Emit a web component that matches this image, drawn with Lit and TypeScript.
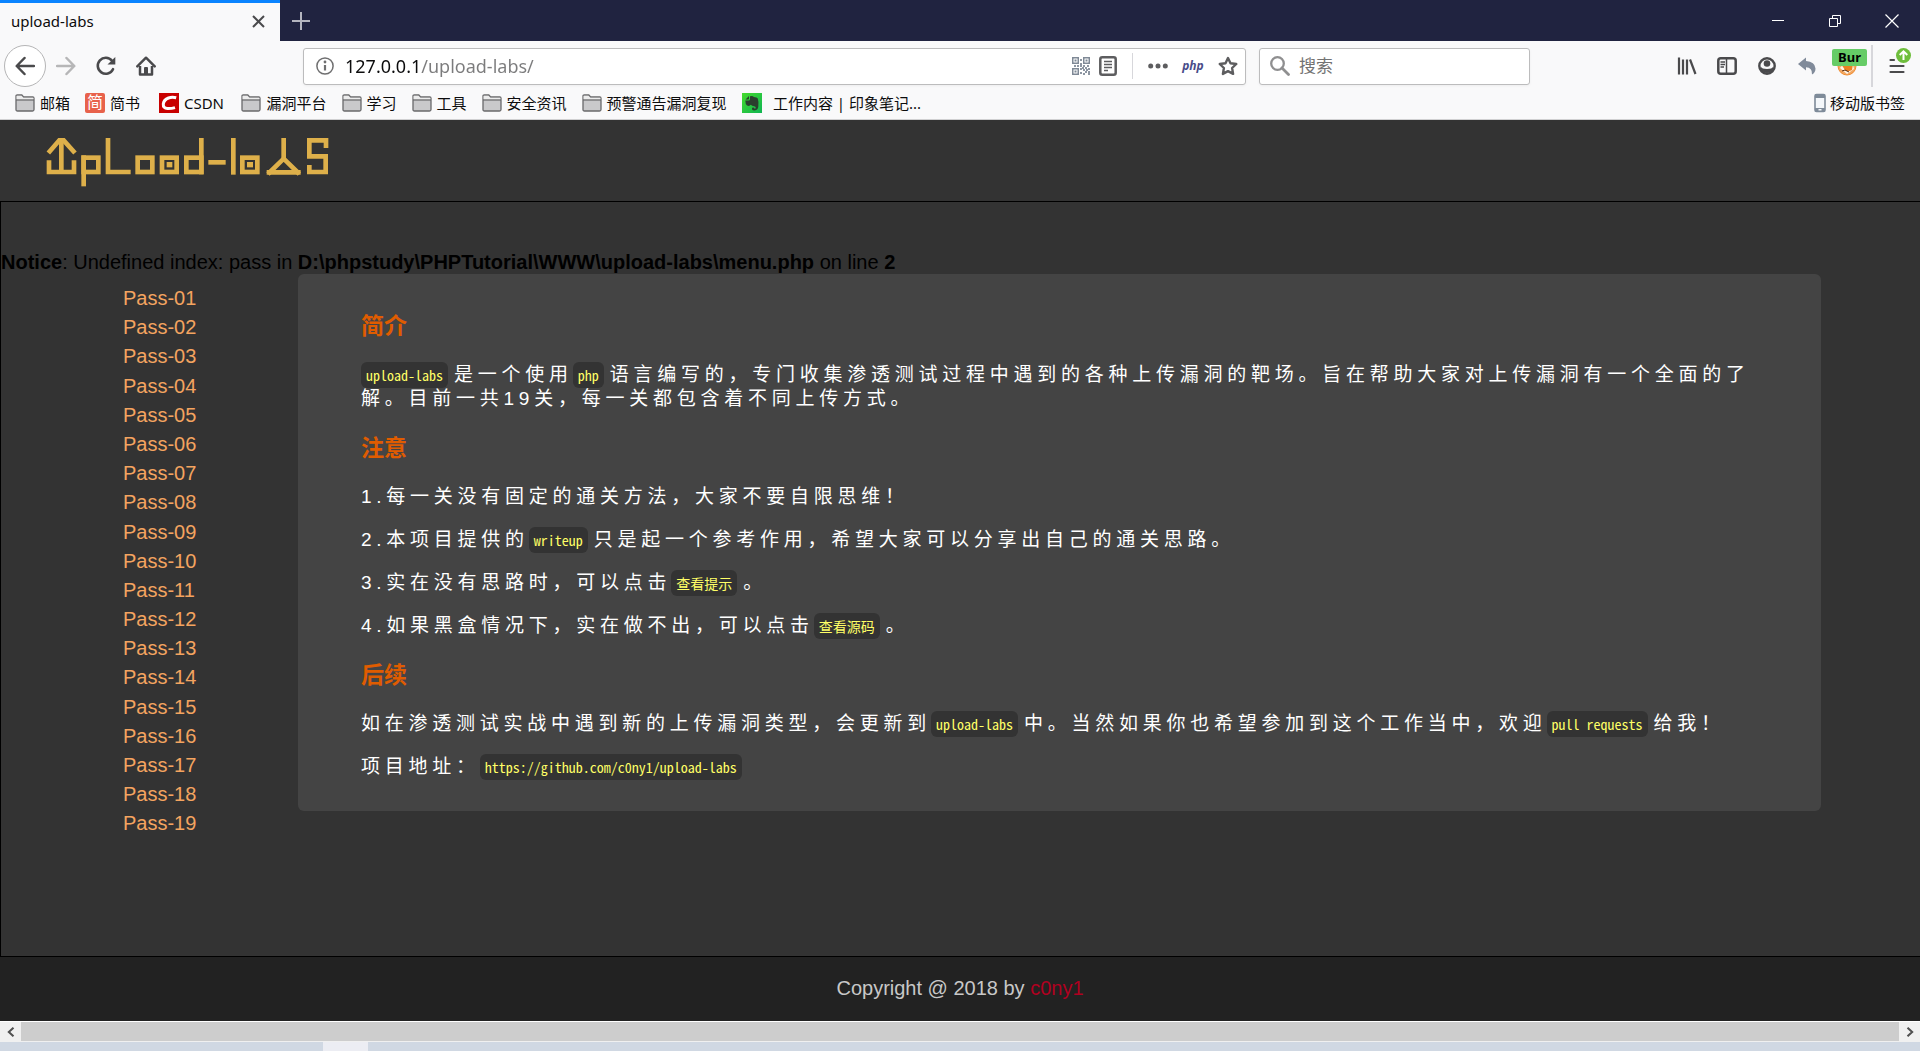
import { LitElement, html, css, svg } from "lit";
import type { TemplateResult } from "lit";
import { customElement } from "lit/decorators.js";

const folder = html`<svg width="20" height="20" viewBox="0 0 20 20" aria-hidden="true">
  <path d="M1 16.5V3.2Q1 2 2.2 2H6.8L8.6 4H17.8Q19 4 19 5.200V16.500Q19 18 17.500 18H2.500Q1 18 1 16.500Z" fill="#c9c9cb" stroke="#69696b" stroke-width="1.300"/>
  <path d="M1.600 2.700H6.500L8.300 4.700H18.400V6.500H1.600Z" fill="#ececec"/>
  <path d="M1 7H19" stroke="#69696b" stroke-width="1.200"/>
</svg>`;

const jianshu = html`<span class="favicon jianshu" aria-hidden="true">简</span>`;

const csdn = html`<svg width="20" height="20" viewBox="0 0 20 20" aria-hidden="true">
  <rect width="20" height="20" fill="#c80000"/>
  <path d="M17.200 4.800Q13 3.800 9.500 5Q4.800 6.800 4.300 11Q4 15.300 8.500 15.500Q12.500 15.600 16 14.600" fill="none" stroke="#fff" stroke-width="3"/>
</svg>`;

const evernote = html`<svg width="20" height="20" viewBox="0 0 20 20" aria-hidden="true">
  <defs><linearGradient id="leaf" x1="0" y1="0" x2="1" y2="1"><stop offset="0" stop-color="#45da2c"/><stop offset="1" stop-color="#0fb553"/></linearGradient></defs>
  <rect width="20" height="20" fill="url(#leaf)"/>
  <path d="M7 3L3.500 6.500H6.200Q7 6.500 7 5.600ZM8 3.200V6Q8 7.500 6.500 7.500H3.300Q3.300 11 5 12.500Q7.500 13.600 8.800 11.800Q10 13.200 12 13.300Q13.800 13.400 13.800 15Q13.800 15.800 12.500 15.800Q12 14.300 10.600 14.600Q9.600 15.200 10.200 16.700Q11 17.700 13.500 17.300Q16 16.800 16.300 13.500Q16.900 9 15.800 5.600Q15.200 4.300 11.800 4Q11 2.500 8 3.200Z" fill="#2b3f2e"/>
</svg>`;

const phone = html`<svg width="12" height="20" viewBox="0 0 12 20" aria-hidden="true">
  <rect x="1" y="1.500" width="10" height="17" rx="1.500" fill="#f4f7fa" stroke="#7f8b99" stroke-width="1.600"/>
  <path d="M1 1.500H11V5H1ZM1 15H11V18.500H1Z" fill="#7f8b99"/>
  <rect x="4.500" y="16" width="3" height="1.500" fill="#f4f7fa"/>
</svg>`;

interface Bookmark { icon: TemplateResult; label: string; }

const bookmarks: Bookmark[] = [
  { icon: folder, label: "邮箱" },
  { icon: jianshu, label: "简书 " },
  { icon: csdn, label: "CSDN\u2009" },
  { icon: folder, label: "漏洞平台" },
  { icon: folder, label: "学习" },
  { icon: folder, label: "工具" },
  { icon: folder, label: "安全资讯" },
  { icon: folder, label: "预警通告漏洞复现" },
  { icon: evernote, label: " \u2009工作内容 | 印象笔记..." },
];

@customElement("browser-chrome")
export class BrowserChrome extends LitElement {
  static styles = css`
    :host {
      display: block;
      background: #f9f9fa;
      border-bottom: 1px solid #d0d0d1;
      color: #0c0c0d;
      font: 15px/20px "Noto Sans", "Noto Sans CJK SC", sans-serif;
    }
    button, input { font: inherit; color: inherit; }
    button {
      display: flex;
      align-items: center;
      justify-content: center;
      padding: 0;
      border: 0;
      background: none;
    }
    svg { display: block; flex: none; }
    .tabs {
      display: flex;
      height: 41px;
      background: #202340;
    }
    .tab {
      display: flex;
      align-items: center;
      justify-content: space-between;
      box-sizing: border-box;
      width: 280px;
      padding: 0 13px 2px 11px;
      border-top: 3px solid #0a84ff;
      background: #f9f9fa;
    }
    .new-tab { width: 42px; }
    .window { display: flex; margin-left: auto; }
    .window button { width: 57px; }
    .nav {
      display: flex;
      align-items: center;
      height: 50px;
      padding-left: 4px;
    }
    .back {
      box-sizing: border-box;
      width: 42px;
      height: 42px;
      border: 1px solid #b5b5b6;
      border-radius: 50%;
      background: #fff;
    }
    .tool { width: 40px; height: 40px; flex: none; }
    .space { flex: 137 1 0; }
    .field {
      display: flex;
      align-items: center;
      box-sizing: border-box;
      height: 37px;
      min-width: 0;
      border: 1px solid #bcbcbd;
      border-radius: 3px;
      background: #fff;
      box-shadow: 0 1px 3px #0000000d;
    }
    .field input {
      flex: 1;
      min-width: 0;
      padding: 0;
      border: 0;
      outline: 0;
      background: none;
      line-height: 24px;
    }
    .address { flex: 922 1 0; padding: 0 7px 0 12px; }
    .address .url {
      margin-left: 11px;
      font-size: 18px;
      color: transparent;
      background: linear-gradient(to right, #0c0c0d 76px, #7b7b7c 76px);
      -webkit-background-clip: text;
      background-clip: text;
    }
    .address .icons { display: flex; align-items: center; }
    .address .rule { width: 1px; height: 26px; margin: 0 15px; background: #d7d7db; }
    .address .icons button { margin-right: 9px; }
    .address .icons .page { margin-right: 0; }
    .address .icons .star { margin: 0 0 0 6px; }
    .address .icons .php {
      width: 22px;
      margin: 0 8px 0 5px;
      color: #484c89;
      font: italic bold 12px/16px "Open Sans", sans-serif;
    }
    .search { flex: 259 1 0; margin-left: 13px; padding-left: 10px; }
    .search input { margin-left: 9px; font-size: 17px; }
    .search input::placeholder { color: #737373; opacity: 1; }
    .proxy { position: relative; }
    .badge {
      position: absolute;
      left: 5px;
      top: 3px;
      width: 35px;
      height: 17px;
      border-radius: 2px;
      background: #66cc66;
      color: #000;
      font: bold 13px/16px "Noto Sans", sans-serif;
      text-align: center;
    }
    .divider { width: 2px; height: 42px; margin-left: 4px; background: #d7d7db; }
    .menu { width: 47px; height: 50px; }
    .bookmarks {
      display: flex;
      align-items: center;
      gap: 15px;
      height: 24px;
      padding: 0 15px 4px;
    }
    .bookmarks a {
      display: flex;
      align-items: center;
      gap: 5px;
      color: inherit;
      text-decoration: none;
      white-space: pre;
    }
    .bookmarks .mobile { margin-left: auto; gap: 4px; }
    .favicon { width: 20px; height: 20px; border-radius: 2px; text-align: center; }
    .jianshu { background: #e8624b; color: #fff; font-size: 16px; line-height: 19px; }
  `;

  render() {
    return html`
      <div class="tabs">
        <div class="tab">
          <span>upload-labs</span>
          <button aria-label="关闭标签页"><svg width="17" height="17" viewBox="0 0 17 17"><path d="M3 3L14 14M14 3L3 14" stroke="#4a4a4c" stroke-width="2"/></svg></button>
        </div>
        <button class="new-tab" aria-label="新标签页"><svg width="18" height="18" viewBox="0 0 18 18"><path d="M9 0V18M0 9H18" stroke="#b4b5bf" stroke-width="2"/></svg></button>
        <div class="window">
          <button aria-label="最小化"><svg width="14" height="14" viewBox="0 0 14 14"><path d="M1 6.500H13" stroke="#fff"/></svg></button>
          <button aria-label="还原"><svg width="14" height="14" viewBox="0 0 14 14"><path d="M1.500 4.500H9.500V12.500H1.500ZM4.500 4.500V1.500H12.500V9.500H9.500" fill="none" stroke="#fff"/></svg></button>
          <button aria-label="关闭"><svg width="14" height="14" viewBox="0 0 14 14"><path d="M.5 .5L13.500 13.500M13.500 .5L.5 13.500" stroke="#fff" stroke-width="1.200"/></svg></button>
        </div>
      </div>
      <div class="nav">
        <button class="back" aria-label="后退"><svg width="20" height="20" viewBox="0 0 20 20"><path d="M19 10H2M9.500 2L1.700 10L9.500 18" fill="none" stroke="#4a4a4c" stroke-width="2.500" stroke-linecap="round" stroke-linejoin="round"/></svg></button>
        <button class="tool" aria-label="前进"><svg width="20" height="20" viewBox="0 0 20 20"><path d="M1 10H18M10.500 2L18.300 10L10.500 18" fill="none" stroke="#b6b6b7" stroke-width="2.500" stroke-linecap="round" stroke-linejoin="round"/></svg></button>
        <button class="tool" aria-label="刷新"><svg width="20" height="20" viewBox="0 0 20 20"><path d="M17 13.200A8 8 0 1 1 16 4.700" fill="none" stroke="#4a4a4c" stroke-width="2.600" stroke-linecap="round"/><path d="M19.300 1V8.600H11.500Z" fill="#4a4a4c"/></svg></button>
        <button class="tool" aria-label="主页"><svg width="20" height="20" viewBox="0 0 20 20"><path d="M1.300 10.300L10 1.700L18.700 10.300" fill="none" stroke="#4a4a4c" stroke-width="2.500" stroke-linecap="round" stroke-linejoin="round"/><path d="M4 10V18.500H16V10" fill="none" stroke="#4a4a4c" stroke-width="2.500" stroke-linejoin="round"/><path d="M8 18.500V12Q8 11 9 11H11Q12 11 12 12V18.500Z" fill="#4a4a4c"/></svg></button>
        <div class="space"></div>
        <div class="field address">
          <svg width="18" height="18" viewBox="0 0 18 18" aria-hidden="true"><circle cx="9" cy="9" r="8.100" fill="none" stroke="#6f6f70" stroke-width="1.500"/><path d="M9 8V13.500" stroke="#6f6f70" stroke-width="2.200"/><circle cx="9" cy="5" r="1.400" fill="#6f6f70"/></svg>
          <input class="url" aria-label="网址" value="127.0.0.1/upload-labs/">
          <div class="icons">
            <button aria-label="二维码">${this.qr()}</button>
            <button class="page" aria-label="阅读视图"><svg width="18" height="20" viewBox="0 0 18 20"><rect x="1.300" y="1.300" width="15.400" height="17.400" rx="2" fill="none" stroke="#5d5d5f" stroke-width="2.500"/><path d="M5 5.500H13M5 8.500H13M5 11.500H13M5 14.500H9" stroke="#5d5d5f" stroke-width="1.300"/></svg></button>
            <div class="rule"></div>
            <button aria-label="页面操作"><svg width="20" height="6" viewBox="0 0 20 6"><g fill="#5d5d5f"><circle cx="2.700" cy="3" r="2.500"/><circle cx="10" cy="3" r="2.500"/><circle cx="17.300" cy="3" r="2.500"/></g></svg></button>
            <button class="php">php</button>
            <button class="star" aria-label="收藏"><svg width="20" height="20" viewBox="0 0 20 20"><path d="M10 2L12.500 7.200L18.300 8L14.100 12L15.100 17.900L10 15.100L4.900 17.900L5.900 12L1.700 8L7.500 7.200Z" fill="none" stroke="#5d5d5f" stroke-width="2.400" stroke-linejoin="round"/></svg></button>
          </div>
        </div>
        <div class="field search">
          <svg width="20" height="20" viewBox="0 0 20 20" aria-hidden="true"><circle cx="7.500" cy="7.500" r="6.300" fill="none" stroke="#8f8f90" stroke-width="2.300"/><path d="M12 12L18.500 18.500" stroke="#8f8f90" stroke-width="2.800" stroke-linecap="round"/></svg>
          <input aria-label="搜索" placeholder="搜索">
        </div>
        <div class="space"></div>
        <button class="tool" aria-label="书库"><svg width="20" height="20" viewBox="0 0 20 20"><path d="M2 1.500V18.500M6 3.500V18.500M10 3.500V18.500" stroke="#4a4a4c" stroke-width="2.200"/><path d="M13 3.500L18.500 18" stroke="#4a4a4c" stroke-width="2.200"/></svg></button>
        <button class="tool" aria-label="侧栏"><svg width="20" height="18" viewBox="0 0 20 18"><rect x="1.300" y="1.300" width="17.400" height="15.400" rx="2.500" fill="none" stroke="#4a4a4c" stroke-width="2.500"/><path d="M9.500 1V17" stroke="#4a4a4c" stroke-width="1.500"/><path d="M3.500 5H8M3.500 7.500H8M3.500 10H7" stroke="#4a4a4c" stroke-width="1.300"/></svg></button>
        <button class="tool" aria-label="账户"><svg width="18" height="18" viewBox="0 0 18 18"><circle cx="9" cy="9" r="7.700" fill="none" stroke="#4a4a4c" stroke-width="2.400"/><circle cx="9" cy="6.500" r="3.300" fill="#4a4a4c"/><path d="M2.500 9.500Q4 12 9 12Q14 12 15.500 9.500Q15.500 16 9 16Q2.500 16 2.500 9.500Z" fill="#4a4a4c"/></svg></button>
        <button class="tool" aria-label="撤销"><svg width="18" height="18" viewBox="0 0 18 18"><path d="M0 7L8 .5V4Q17 4.500 17.500 11.500Q17.500 15.500 14 17.500Q14.500 10.500 8 10.300V13.500Z" fill="#818b9a"/></svg></button>
        <button class="tool proxy" aria-label="代理 Bur">
          <svg width="20" height="20" viewBox="0 0 20 20"><circle cx="10" cy="10" r="9" fill="#f3a862" stroke="#f08b2e" stroke-width="1"/><path d="M3 12Q5 8 16 9L17 13L10 18Z" fill="#fff5e8"/><path d="M4 8H16L15 14Q10 16.500 8 14Z" fill="#eb8121"/><path d="M5 15L8 14L12 16" stroke="#5b3014" fill="none"/></svg>
          <span class="badge">Bur</span>
        </button>
        <div class="divider"></div>
        <button class="menu" aria-label="菜单"><svg width="28" height="36" viewBox="0 0 28 36"><path d="M7.500 12H11M7.500 18H20.500M7.500 24H20.500" stroke="#4a4a4c" stroke-width="2.200" stroke-linecap="round"/><circle cx="20.500" cy="7.500" r="7.500" fill="#6ebe3c"/><path d="M20.500 12V3.500M16.700 7L20.500 3.300L24.300 7" fill="none" stroke="#fff" stroke-width="2"/></svg></button>
      </div>
      <nav class="bookmarks" aria-label="书签">
        ${bookmarks.map((b) => html`<a href="#">${b.icon}<span>${b.label}</span></a>`)}
        <a class="mobile" href="#">${phone}<span>移动版书签</span></a>
      </nav>
    `;
  }

  private qr() {
    const eyes = [[0, 0], [11, 0], [0, 11]];
    const dots = [[8, 2], [8, 6], [2, 8], [5, 8], [8, 8], [11, 8], [15, 8], [8, 11], [8, 15], [11, 12], [13, 10], [16, 11], [13, 14], [11, 16], [16, 16], [14, 12], [16, 14], [10, 10]];
    return html`<svg width="18" height="18" viewBox="0 0 18 18">
      ${eyes.map(([x, y]) => svg`<rect x=${x + 0.75} y=${y + 0.75} width="5.500" height="5.500" fill="none" stroke="#7f8996" stroke-width="1.500"/><rect x=${x + 2.5} y=${y + 2.5} width="2" height="2" fill="#7f8996"/>`)}
      ${dots.map(([x, y]) => svg`<rect x=${x} y=${y} width="2" height="2" fill="#8d96a2"/>`)}
    </svg>`;
  }
}

const passes = Array.from({ length: 19 }, (_, i) => `Pass-${String(i + 1).padStart(2, "0")}`);

@customElement("labs-page")
export class LabsPage extends LitElement {
  static styles = css`
    :host {
      display: flex;
      flex-direction: column;
      flex: 1;
      background: #333;
      color: #000;
      font: 20px/24px "Liberation Sans", "Noto Sans CJK SC", sans-serif;
    }
    a { text-decoration: none; }
    .head { padding: 17px 46px 14px; }
    .logo { display: block; fill: none; stroke: #deb04a; stroke-width: 14; }
    .logo .dot { fill: #deb04a; stroke: none; }
    .main {
      flex: 1;
      padding-top: 48px;
      border: 1px solid #000;
      border-right: 0;
    }
    .notice { margin: 0; }
    .content {
      display: flex;
      align-items: flex-start;
      padding-right: 99px;
    }
    .passes {
      flex: none;
      box-sizing: border-box;
      width: 297px;
      margin: 0;
      padding: 10px 0 0 122px;
      list-style: none;
      line-height: 1.46;
    }
    .passes a { color: #f4a460; }
    .panel {
      flex: 1;
      padding: 14px 63px 13px;
      border-radius: 6px;
      background: #444;
      color: #fff;
    }
    h3 {
      margin: 23px 0;
      color: #e05c00;
      font-size: 23px;
      line-height: 28px;
    }
    .panel p {
      margin: 19px 0;
      font-size: 19px;
      letter-spacing: 0.25em;
    }
    .panel h3:first-child { margin-top: 24px; }
    code {
      margin-right: 6px;
      padding: 3px 5px;
      border-radius: 6px;
      background: #333;
      color: #ff6;
      font: 14px/18px "Noto Sans Mono CJK SC", "Liberation Mono", "Noto Sans CJK SC", monospace;
      letter-spacing: normal;
    }
    code a { color: inherit; }
    .foot {
      padding: 19px 0 21px;
      background: #222;
      color: #c8c8c8;
      text-align: center;
    }
    .foot a { color: #b00020; }
  `;

  render() {
    return html`
      <header class="head">
        <svg class="logo" width="283" height="50" viewBox="138 65 849 150" role="img" aria-label="upload-labs">
          <polyline points="147,135 147,170 222,170 222,135"/>
          <line x1="184" y1="74" x2="184" y2="170"/>
          <polyline points="145,113 178,75 191,75 225,113"/>
          <rect x="251" y="127" width="44" height="43"/>
          <line x1="251" y1="120" x2="251" y2="213"/>
          <polyline points="324,68 324,170 392,170"/>
          <rect x="413" y="127" width="44" height="43"/>
          <rect x="486" y="127" width="44" height="43"/>
          <rect class="dot" x="500" y="140" width="17" height="16"/>
          <rect x="559" y="127" width="45" height="43"/>
          <line x1="604" y1="68" x2="604" y2="177"/>
          <line x1="625" y1="141" x2="677" y2="141"/>
          <line x1="700" y1="68" x2="700" y2="178"/>
          <rect x="727" y="127" width="45" height="43"/>
          <rect class="dot" x="741" y="140" width="18" height="16"/>
          <line x1="851" y1="68" x2="851" y2="132"/>
          <polyline points="804,176 851,130 898,176"/>
          <line x1="800" y1="171" x2="902" y2="171"/>
          <polyline points="978,98 978,75 928,75 928,123 977,123 977,170 928,170 928,149"/>
        </svg>
      </header>
      <main class="main">
        <p class="notice"><b>Notice</b>: Undefined index: pass in <b>D:\\phpstudy\\PHPTutorial\\WWW\\upload-labs\\menu.php</b> on line <b>2</b></p>
        <div class="content">
          <ul class="passes">
            ${passes.map((p) => html`<li><a href="#">${p}</a></li>`)}
          </ul>
          <article class="panel">
            <h3>简介</h3>
            <p><code>upload-labs</code>是一个使用<code>php</code>语言编写的，专门收集渗透测试过程中遇到的各种上传漏洞的靶场。旨在帮助大家对上传漏洞有一个全面的了解。目前一共19关，每一关都包含着不同上传方式。</p>
            <h3>注意</h3>
            <p>1.每一关没有固定的通关方法，大家不要自限思维！</p>
            <p>2.本项目提供的<code>writeup</code>只是起一个参考作用，希望大家可以分享出自己的通关思路。</p>
            <p>3.实在没有思路时，可以点击<code>查看提示</code>。</p>
            <p>4.如果黑盒情况下，实在做不出，可以点击<code>查看源码</code>。</p>
            <h3>后续</h3>
            <p>如在渗透测试实战中遇到新的上传漏洞类型，会更新到<code>upload-labs</code>中。当然如果你也希望参加到这个工作当中，欢迎<code>pull requests</code>给我！</p>
            <p>项目地址：<code><a href="https://github.com/c0ny1/upload-labs">https://github.com/c0ny1/upload-labs</a></code></p>
          </article>
        </div>
      </main>
      <footer class="foot">Copyright @ 2018 by <a href="#">c0ny1</a></footer>
    `;
  }
}

@customElement("app-root")
export class AppRoot extends LitElement {
  static styles = css`
    :host {
      display: flex;
      flex-direction: column;
      min-height: 100vh;
    }
    .scroll {
      display: flex;
      padding-bottom: 1px;
      border-top: 1px solid #fff;
      background: #f0f0f0;
    }
    .scroll button {
      display: flex;
      align-items: center;
      justify-content: center;
      width: 21px;
      height: 19px;
      padding: 0;
      border: 0;
      background: none;
    }
    .thumb { flex: 1; background: #cdcdcd; }
    .taskbar { height: 9px; padding-left: 323px; background: #d0d8e3; }
    .active { width: 45px; height: 9px; background: #ecedf3; }
  `;

  render() {
    return html`
      <browser-chrome></browser-chrome>
      <labs-page></labs-page>
      <div class="scroll">
        <button aria-label="向左滚动"><svg width="8" height="10" viewBox="0 0 8 10"><path d="M6.500 .7L1.800 5L6.500 9.300" fill="none" stroke="#505050" stroke-width="2"/></svg></button>
        <div class="thumb"></div>
        <button aria-label="向右滚动"><svg width="8" height="10" viewBox="0 0 8 10"><path d="M1.500 .7L6.200 5L1.500 9.300" fill="none" stroke="#505050" stroke-width="2"/></svg></button>
      </div>
      <div class="taskbar"><div class="active"></div></div>
    `;
  }
}
